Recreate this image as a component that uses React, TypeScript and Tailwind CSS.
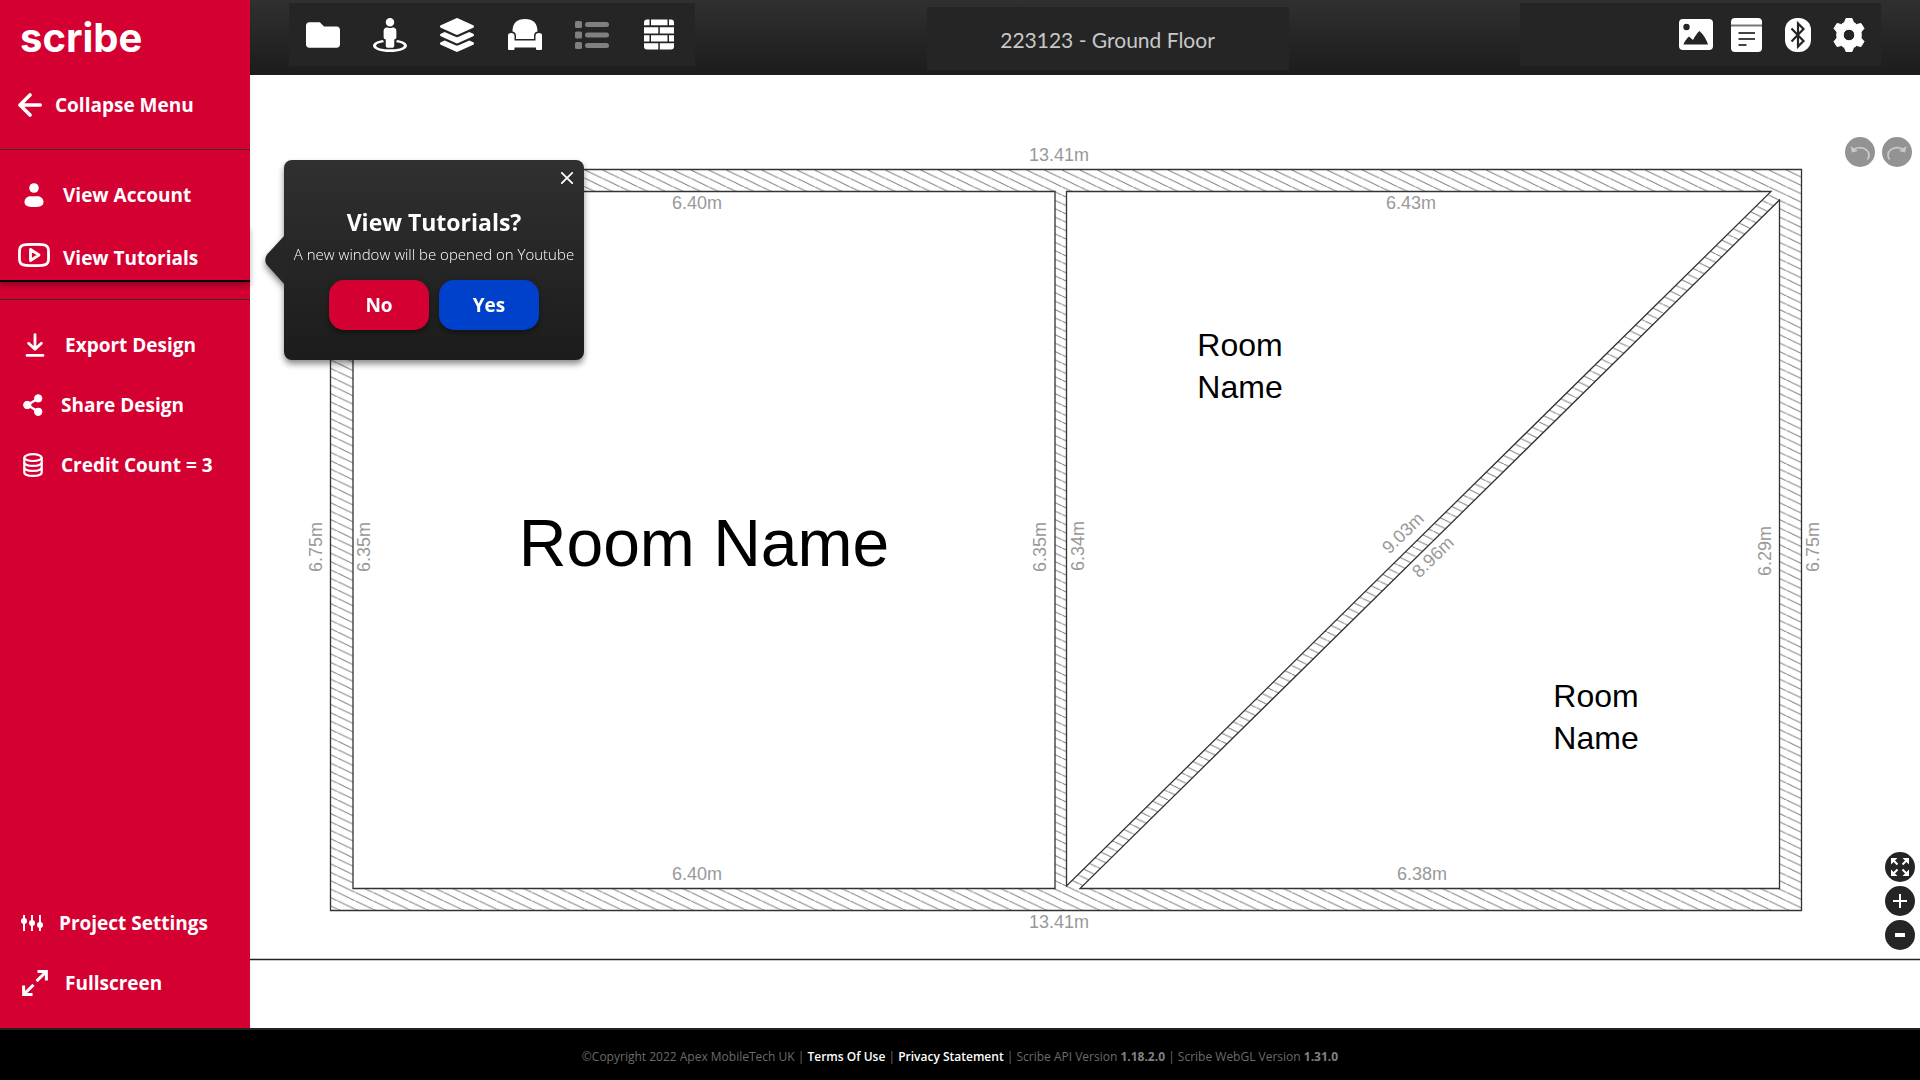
import type { ReactNode } from "react";
import { FaFolder, FaStreetView, FaLayerGroup } from "react-icons/fa";

type IconProps = { className?: string };

const BackIcon = ({ className }: IconProps) => (
  <svg viewBox="0 0 24 24" className={className} fill="none" stroke="currentColor" strokeWidth="3.600" strokeLinecap="round" strokeLinejoin="round" aria-hidden="true">
    <path d="M22.200 12H3M12 2L2 12l10 10" />
  </svg>
);

const UserIcon = ({ className }: IconProps) => (
  <svg viewBox="0 0 20 24" className={className} fill="currentColor" aria-hidden="true">
    <circle cx="10" cy="5" r="4.800" />
    <path d="M6.500 13.200h7c3.500 0 6 2.500 6 5.800 0 4-3.500 5-9.500 5s-9.500-1-9.500-5c0-3.300 2.500-5.800 6-5.800z" />
  </svg>
);

const VideoIcon = ({ className }: IconProps) => (
  <svg viewBox="0 0 32 24" className={className} fill="none" stroke="currentColor" strokeWidth="2.800" strokeLinejoin="round" aria-hidden="true">
    <path d="M8 1.600q8-.6 16 0q6 .4 6.400 5q.3 5.400 0 10.800q-.4 4.600-6.400 5q-8 .6-16 0q-6-.4-6.400-5q-.3-5.400 0-10.800q.4-4.600 6.400-5z" />
    <path d="M12.500 6.500v11l8.500-5.500z" />
  </svg>
);

const ExportIcon = ({ className }: IconProps) => (
  <svg viewBox="0 0 20 24" className={className} fill="none" stroke="currentColor" strokeWidth="2.800" strokeLinecap="round" strokeLinejoin="round" aria-hidden="true">
    <path d="M10 1.600v14M3.600 10.200L10 16.200l6.400-6M2 22.400h16" />
  </svg>
);

const ShareIcon = ({ className }: IconProps) => (
  <svg viewBox="0 0 20 22" className={className} fill="currentColor" stroke="currentColor" aria-hidden="true">
    <path d="M15 4.500L4.500 11 15 17.500" fill="none" strokeWidth="2.400" />
    <circle cx="15.200" cy="4.400" r="3.700" />
    <circle cx="4.300" cy="11" r="3.700" />
    <circle cx="15.200" cy="17.800" r="3.700" />
  </svg>
);

const CoinsIcon = ({ className }: IconProps) => (
  <svg viewBox="0 0 20 24" className={className} fill="none" stroke="currentColor" strokeWidth="2.200" aria-hidden="true">
    <ellipse cx="10" cy="4.600" rx="8.700" ry="3.400" />
    <path d="M1.300 4.600v15c0 1.900 3.900 3.300 8.700 3.300s8.700-1.400 8.700-3.300v-15" />
    <path d="M1.300 9.600c0 1.900 3.900 3.300 8.700 3.300s8.700-1.400 8.700-3.300M1.300 14.600c0 1.900 3.900 3.300 8.700 3.300s8.700-1.400 8.700-3.300" />
  </svg>
);

const SlidersIcon = ({ className }: IconProps) => (
  <svg viewBox="0 0 22 16" className={className} fill="currentColor" aria-hidden="true">
    <path d="M2 0h2v16H2zM10 0h2v16h-2zM18 0h2v16h-2z" />
    <circle cx="3" cy="6" r="3" />
    <circle cx="11" cy="8" r="3" />
    <circle cx="19" cy="10" r="3" />
  </svg>
);

const ExpandIcon = ({ className }: IconProps) => (
  <svg viewBox="0 0 26 26" className={className} fill="none" stroke="currentColor" strokeWidth="3" aria-hidden="true">
    <path d="M15.500 1.600h8.900v9M24 2L14.500 11.200M10.500 24.400H1.600v-9M2 24l9.500-9.200" />
  </svg>
);

const ArmchairIcon = ({ className }: IconProps) => (
  <svg viewBox="0 0 34 32" className={className} fill="currentColor" aria-hidden="true">
    <path d="M4.500 12.500C4.500 4 9 0 17 0s12.500 4 12.500 12.500c-2.500.5-3.500 2-3.500 4.500v3H8v-3c0-2.500-1-4-3.500-4.500z" />
    <path d="M0 16.500q0-2.500 3.200-2.500t3.300 3v4.500h21V17q0-3 3.300-3t3.200 2.500V30q0 1-1 1h-4q-1 0-1-1v-1.500H6.500V30q0 1-1 1h-4.500q-1 0-1-1z" />
  </svg>
);

const ListIcon = ({ className }: IconProps) => (
  <svg viewBox="0 0 34 28" className={className} fill="currentColor" aria-hidden="true">
    <rect width="7" height="7" rx="1.500" />
    <rect y="10.500" width="7" height="7" rx="1.500" />
    <rect y="21" width="7" height="7" rx="1.500" />
    <rect x="10" y="1" width="24" height="5" rx="2.500" />
    <rect x="10" y="11.500" width="24" height="5" rx="2.500" />
    <rect x="10" y="22" width="24" height="5" rx="2.500" />
  </svg>
);

const BricksIcon = ({ className }: IconProps) => (
  <svg viewBox="0 0 30 31" className={className} fill="currentColor" aria-hidden="true">
    <path d="M3 .5h2.500v5.800H0V3.500q0-3 3-3zM7 .5h16.500v5.800H7zM25 .5h2q3 0 3 3v2.800h-5zM0 8.200h14.300v6.200H0zM15.800 8.200H30v6.200H15.800zM0 16.200h5.500v6.200H0zM7 16.200h16.500v6.200H7zM25 16.200h5v6.200h-5zM0 24.300h14.300v6.200H3q-3 0-3-3zM15.800 24.300H30v3.200q0 3-3 3H15.800z" />
  </svg>
);

const PictureIcon = ({ className }: IconProps) => (
  <svg viewBox="0 0 34 31" className={className} aria-hidden="true">
    <rect width="34" height="31" rx="4" fill="currentColor" />
    <circle cx="7.500" cy="8" r="3.200" fill="#252525" />
    <path d="M4.500 25.500c.5-2 3.500-6.500 5.500-8l4 3.500c1.500-3 4-7 6.500-9 4 3.500 7.500 9.500 8.500 13.500z" fill="#252525" />
  </svg>
);

const NotesIcon = ({ className }: IconProps) => (
  <svg viewBox="0 0 31 34" className={className} aria-hidden="true">
    <rect width="31" height="34" rx="4" fill="currentColor" />
    <path d="M0 7.500h31" stroke="#777" strokeWidth="2" />
    <path d="M7.500 15H24M7.500 21H24M7.500 27H15.500" stroke="#444" strokeWidth="2" />
  </svg>
);

const BluetoothIcon = ({ className }: IconProps) => (
  <svg viewBox="0 0 26 34" className={className} aria-hidden="true">
    <rect width="26" height="34" rx="12" fill="currentColor" />
    <path d="M6.500 10.500L18.500 23 13 28.500V5.500L18.500 11 6.500 23.500" fill="none" stroke="#252525" strokeWidth="2.200" />
  </svg>
);

const GearIcon = ({ className }: IconProps) => (
  <svg viewBox="-17 -17 34 34" className={className} fill="currentColor" aria-hidden="true">
    <path
      fillRule="evenodd"
      d="M-3-16.500H3L4.500-12.500Q6-12 7.500-10.500L12-11.500L15-6.500L12-3Q12.500 0 12 3L15 6.500L12 11.500L7.500 10.500Q6 12 4.500 12.500L3 16.500H-3L-4.500 12.500Q-6 12-7.500 10.500L-12 11.500L-15 6.500L-12 3Q-12.500 0-12-3L-15-6.500L-12-11.500L-7.500-10.500Q-6-12-4.500-12.500ZM0-5.800A5.800 5.800 0 1 0 0 5.800A5.800 5.800 0 1 0 0-5.800Z"
      stroke="currentColor"
      strokeLinejoin="round"
    />
  </svg>
);

const TurnIcon = ({ className }: IconProps) => (
  <svg viewBox="0 0 30 30" className={className} fill="none" stroke="#c9c9c9" strokeWidth="1.800" aria-hidden="true">
    <path d="M22.500 22.500c4.500-7-3-15-13.500-10.500" />
    <path d="M5.500 9l1.500 6.500 6-1.500z" fill="#c9c9c9" stroke="none" />
  </svg>
);

const FitIcon = ({ className }: IconProps) => (
  <svg viewBox="0 0 18 18" className={className} fill="#fff" stroke="#fff" strokeWidth="2" aria-hidden="true">
    <path d="M0 0h6.500L0 6.500zM18 0v6.500L11.500 0zM0 18v-6.500L6.500 18zM18 18h-6.500L18 11.500z" stroke="none" />
    <path d="M2 2l4.500 4.500M16 2l-4.500 4.500M2 16l4.500-4.500M16 16l-4.500-4.500" />
  </svg>
);

type MenuItemProps = { icon: ReactNode; label: string; gap: string };

const MenuItem = ({ icon, label, gap }: MenuItemProps) => (
  <button type="button" className={`flex h-15 w-full items-center text-left ${gap}`}>
    {icon}
    <span>{label}</span>
  </button>
);

const labels = [
  { x: 1059, y: 155, t: "13.41m", r: 0 },
  { x: 697, y: 203, t: "6.40m", r: 0 },
  { x: 1411, y: 203, t: "6.43m", r: 0 },
  { x: 697, y: 874, t: "6.40m", r: 0 },
  { x: 1422, y: 874, t: "6.38m", r: 0 },
  { x: 1059, y: 922, t: "13.41m", r: 0 },
  { x: 316, y: 547, t: "6.75m", r: -90 },
  { x: 364, y: 547, t: "6.35m", r: -90 },
  { x: 1040, y: 547, t: "6.35m", r: -90 },
  { x: 1078, y: 546, t: "6.34m", r: -90 },
  { x: 1765, y: 551, t: "6.29m", r: -90 },
  { x: 1813, y: 547, t: "6.75m", r: -90 },
  { x: 1403, y: 533, t: "9.03m", r: -44 },
  { x: 1433, y: 557, t: "8.96m", r: -44 },
];

const FloorPlan = () => (
  <svg viewBox="250 75 1670 953" className="block h-full w-full" role="img" aria-label="Ground floor plan">
    <defs>
      <pattern id="hatch" patternUnits="userSpaceOnUse" x="1009" y="170" width="17.67" height="8.4">
        <path d="M-17.67-8.4L35.34 16.8" stroke="#777" strokeWidth="1" />
      </pattern>
    </defs>
    <path
      fill="url(#hatch)"
      fillRule="evenodd"
      stroke="#333"
      strokeWidth="1.300"
      d="M330.500 169.500H1801.500V910.500H330.500ZM353 191.500H1055V888.500H353ZM1066.500 191.500H1771L1066.500 886ZM1779.500 200V888.500H1080Z"
    />
    <path d="M250 959.500H1920" stroke="#222" strokeWidth="1.300" />
    <g fill="#999" fontFamily="'Liberation Sans', Arial, sans-serif" fontSize="18" textAnchor="middle">
      {labels.map(({ x, y, t, r }) => (
        <text key={`${x}-${y}`} transform={`translate(${x} ${y}) rotate(${r})`} dy="6">
          {t}
        </text>
      ))}
    </g>
    <g fill="#000" fontFamily="'Liberation Sans Narrow', 'Arial Narrow', 'Liberation Sans', sans-serif" textAnchor="middle">
      <text x="704" y="566" fontSize="66">Room Name</text>
      <text x="1240" y="356" fontSize="32">Room</text>
      <text x="1240" y="398" fontSize="32">Name</text>
      <text x="1596" y="707" fontSize="32">Room</text>
      <text x="1596" y="749" fontSize="32">Name</text>
    </g>
  </svg>
);

const Sidebar = () => (
  <nav className="flex w-[250px] shrink-0 flex-col bg-[#d50032] text-[19px] font-bold text-white">
    <div className="flex h-[75px] items-center pl-5 font-['Inter',sans-serif] text-[40px]">scribe</div>
    <MenuItem icon={<BackIcon className="size-6" />} label="Collapse Menu" gap="gap-[13px] pl-[18px]" />
    <hr className="mt-[14px] border-[#3a2a2e]" />
    <div className="pt-[15px]">
      <MenuItem icon={<UserIcon className="h-6 w-5" />} label="View Account" gap="gap-[19px] pl-6" />
      <button type="button" className="flex h-[57px] w-full items-center gap-[13px] border-b-2 border-black pt-1 pl-[18px] text-left shadow-[0_4px_6px_rgba(0,0,0,0.3)]">
        <VideoIcon className="h-6 w-8" />
        <span className="pt-2">View Tutorials</span>
      </button>
    </div>
    <hr className="mt-[17px] border-[#3a2a2e]" />
    <div className="pt-[15px]">
      <MenuItem icon={<ExportIcon className="h-6 w-5" />} label="Export Design" gap="gap-5 pl-[25px]" />
      <MenuItem icon={<ShareIcon className="h-6 w-5" />} label="Share Design" gap="gap-[18px] pl-[23px]" />
      <MenuItem icon={<CoinsIcon className="h-6 w-5" />} label="Credit Count = 3" gap="gap-[18px] pl-[23px]" />
    </div>
    <div className="mt-auto pb-[15px]">
      <MenuItem icon={<SlidersIcon className="h-4 w-[22px]" />} label="Project Settings" gap="gap-4 pl-[21px]" />
      <MenuItem icon={<ExpandIcon className="size-[26px]" />} label="Fullscreen" gap="gap-[17px] pl-[22px]" />
    </div>
  </nav>
);

const tools = [
  { name: "Files", icon: <FaFolder className="size-[34px]" /> },
  { name: "Street view", icon: <FaStreetView className="size-[34px]" /> },
  { name: "Layers", icon: <FaLayerGroup className="size-[34px]" /> },
  { name: "Furniture", icon: <ArmchairIcon className="h-8 w-[34px]" /> },
  { name: "List", icon: <ListIcon className="h-7 w-[34px] text-[#808080]" /> },
  { name: "Walls", icon: <BricksIcon className="h-[31px] w-[30px]" /> },
];

const actions = [
  { name: "Images", icon: <PictureIcon className="h-[31px] w-[34px]" /> },
  { name: "Notes", icon: <NotesIcon className="h-[34px] w-[31px]" /> },
  { name: "Bluetooth", icon: <BluetoothIcon className="h-[34px] w-[26px]" /> },
  { name: "Settings", icon: <GearIcon className="size-[34px]" /> },
];

const Toolbar = () => (
  <header className="flex h-[75px] items-start justify-between bg-linear-to-b from-[#303030] to-[#1c1c1c] px-[39px] text-white">
    <div className="mt-[3px] grid h-[63px] w-[406px] grid-cols-6 bg-[#252525] pr-[2px]">
      {tools.map(({ name, icon }) => (
        <button key={name} type="button" aria-label={name} className="flex items-center justify-center">
          {icon}
        </button>
      ))}
    </div>
    <h1 className="mt-[7px] flex h-[63px] w-[362px] items-center justify-center bg-[#252525] pt-[2px] font-['Lato',sans-serif] text-[21px] whitespace-pre text-[#c8c8c8]">
      {"223123 - Ground Floor"}
    </h1>
    <div className="mt-[3px] flex h-[63px] w-[361px] justify-end bg-[#252525] pr-[7px]">
      {actions.map(({ name, icon }) => (
        <button key={name} type="button" aria-label={name} className="flex w-[51px] items-center justify-center">
          {icon}
        </button>
      ))}
    </div>
  </header>
);

const TutorialDialog = () => (
  <section role="dialog" aria-labelledby="tutorial-title" className="absolute top-[85px] left-[34px] w-[300px] text-center text-white drop-shadow-[0_4px_3px_rgba(0,0,0,0.45)]">
    <svg viewBox="0 0 20 50" className="absolute top-[75px] -left-[19px] h-[50px] w-5" aria-hidden="true">
      <path d="M20 0L2 19.500Q-1.500 25 2 30L20 50z" fill="#262626" />
    </svg>
    <div className="flex h-[200px] flex-col items-center rounded-lg bg-linear-to-b from-[#303030] to-[#1c1c1c] pt-[46px]">
      <button type="button" aria-label="Close" className="absolute top-2 right-[7px] flex size-5 items-center justify-center">
        <svg viewBox="0 0 12 12" className="size-3" stroke="#fff" strokeWidth="1.800" strokeLinecap="round" aria-hidden="true">
          <path d="M.8.8l10.400 10.400M11.200.8L.8 11.200" />
        </svg>
      </button>
      <h2 id="tutorial-title" className="text-[23px] leading-8 font-bold">View Tutorials?</h2>
      <p className="mt-[2px] text-[15px] leading-7 font-light whitespace-nowrap">A new window will be opened on Youtube</p>
      <div className="mt-3 flex gap-[10px] text-[19px] font-bold">
        <button type="button" className="h-[50px] w-[100px] rounded-[15px] bg-[#d50032] shadow-[0_3px_5px_rgba(0,0,0,0.4)]">No</button>
        <button type="button" className="h-[50px] w-[100px] rounded-[15px] bg-[#0041cc] shadow-[0_3px_5px_rgba(0,0,0,0.4)]">Yes</button>
      </div>
    </div>
  </section>
);

const Footer = () => (
  <footer className="flex h-[52px] items-center justify-center border-t-2 border-[#222] bg-black pt-1 text-xs text-[#6b6b6b]">
    <p className="whitespace-pre">
      ©Copyright 2022 Apex MobileTech UK | <a href="#terms" className="font-semibold text-white">Terms Of Use</a> |{" "}
      <a href="#privacy" className="font-semibold text-white">Privacy Statement</a> | Scribe API Version <b className="text-[#808080]">1.18.2.0</b> | Scribe WebGL Version{" "}
      <b className="text-[#808080]">1.31.0</b>
    </p>
  </footer>
);

export default function App() {
  return (
    <div className="flex min-h-screen flex-col bg-white font-['Open_Sans',sans-serif]">
      <div className="flex grow">
        <Sidebar />
        <div className="flex min-w-0 grow flex-col">
          <Toolbar />
          <main className="relative grow">
            <FloorPlan />
            <TutorialDialog />
            <div className="absolute top-[62px] right-2 flex gap-[7px]">
              <button type="button" aria-label="Undo" className="size-[30px] rounded-full bg-[#939393]">
                <TurnIcon className="size-[30px]" />
              </button>
              <button type="button" aria-label="Redo" className="size-[30px] rounded-full bg-[#939393]">
                <TurnIcon className="size-[30px] -scale-x-100" />
              </button>
            </div>
            <div className="absolute right-[5px] bottom-[78px] flex flex-col gap-1">
              <button type="button" aria-label="Fit to screen" className="flex size-[30px] items-center justify-center rounded-full bg-[#252525]">
                <FitIcon className="size-[18px]" />
              </button>
              <button type="button" aria-label="Zoom in" className="flex size-[30px] items-center justify-center rounded-full bg-[#252525]">
                <svg viewBox="0 0 14 14" className="size-[14px]" stroke="#fff" strokeWidth="2" aria-hidden="true">
                  <path d="M7 0v14M0 7h14" />
                </svg>
              </button>
              <button type="button" aria-label="Zoom out" className="flex size-[30px] items-center justify-center rounded-full bg-[#252525]">
                <svg viewBox="0 0 10 4" className="h-1 w-[10px]" fill="#fff" aria-hidden="true">
                  <path d="M0 0h10v4H0z" />
                </svg>
              </button>
            </div>
          </main>
        </div>
      </div>
      <Footer />
    </div>
  );
}
